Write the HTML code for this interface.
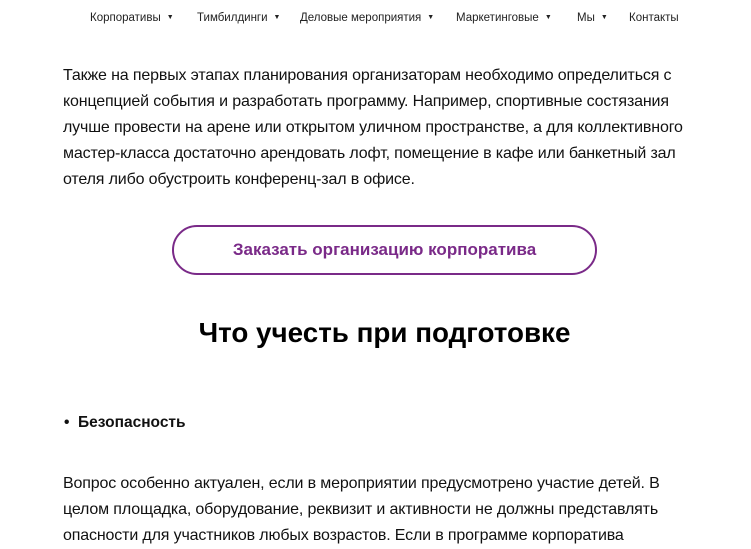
<!DOCTYPE html>
<html><head><meta charset="utf-8"><style>
*{margin:0;padding:0;box-sizing:border-box}
body{width:751px;height:547px;overflow:hidden;background:#fff;font-family:"Liberation Sans",sans-serif;color:#111;position:relative}
.n{position:absolute;top:12px;font-size:11.5px;color:#222;white-space:nowrap}
.n i{font-style:normal;font-size:7px;margin-left:6px;vertical-align:2px}
.p{position:absolute;left:63px;font-size:16px;line-height:26px;white-space:nowrap;letter-spacing:-0.15px}
.btn{position:absolute;left:172px;top:225px;width:425px;height:50px;border:2px solid #7a2a88;border-radius:25px;color:#7a2a88;font-weight:bold;font-size:17px;text-align:center;line-height:46px}
h2{position:absolute;left:0;width:769px;text-align:center;top:317px;font-size:27.8px;font-weight:bold;color:#000}
.b{position:absolute;left:64px;top:414px;font-size:15.5px;font-weight:bold}
</style></head><body>
<div class="n" style="left:90px">Корпоративы<i>▼</i></div>
<div class="n" style="left:197px">Тимбилдинги<i>▼</i></div>
<div class="n" style="left:300px">Деловые мероприятия<i>▼</i></div>
<div class="n" style="left:456px">Маркетинговые<i>▼</i></div>
<div class="n" style="left:577px">Мы<i>▼</i></div>
<div class="n" style="left:629px">Контакты</div>
<div class="p" style="top:63px">Также на первых этапах планирования организаторам необходимо определиться с<br>концепцией события и разработать программу. Например, спортивные состязания<br>лучше провести на арене или открытом уличном пространстве, а для коллективного<br>мастер-класса достаточно арендовать лофт, помещение в кафе или банкетный зал<br>отеля либо обустроить конференц-зал в офисе.</div>
<div class="btn">Заказать организацию корпоратива</div>
<h2>Что учесть при подготовке</h2>
<div class="b">•&nbsp; Безопасность</div>
<div class="p" style="top:471px">Вопрос особенно актуален, если в мероприятии предусмотрено участие детей. В<br>целом площадка, оборудование, реквизит и активности не должны представлять<br>опасности для участников любых возрастов. Если в программе корпоратива</div>
</body></html>
